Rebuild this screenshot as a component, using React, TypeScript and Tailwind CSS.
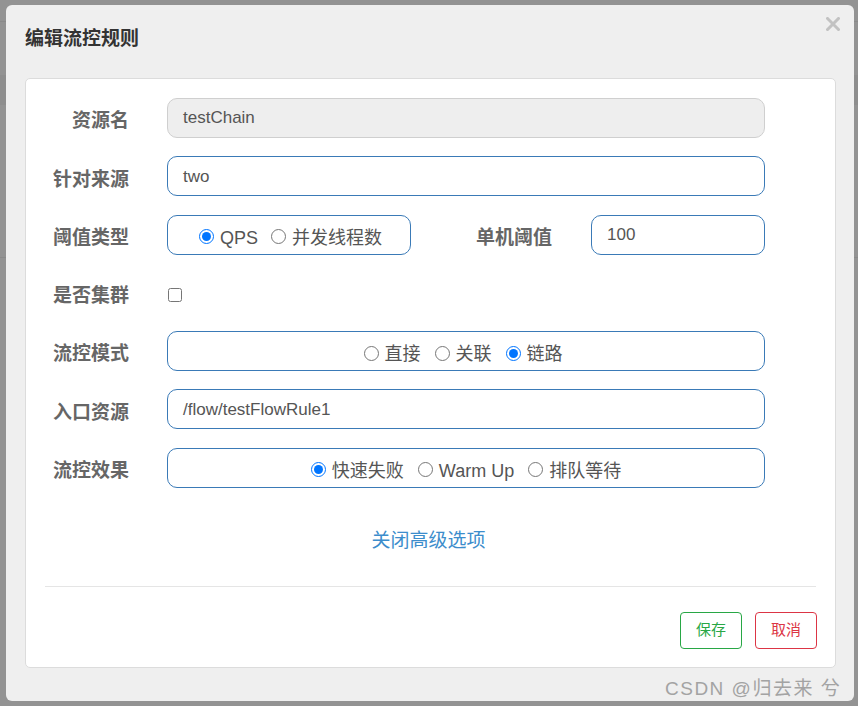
import React from "react";

const font = { fontFamily: '"Liberation Sans", "Noto Sans CJK SC", sans-serif' };

export default function App() {
  return (
    <div className="relative h-[706px] w-[858px] overflow-hidden bg-[#939393]" style={font}>
      {/* page behind overlay */}
      <div className="flex flex-col">
        <div className="h-[22px] border-b border-[#8a8a8a]" />
        <div className="mt-[53px] h-[30px] bg-[#8e8e8e]" />
        <div className="mt-[152px] border-b border-[#8a8a8a]" />
      </div>

      {/* dialog */}
      <div className="absolute left-[6px] top-[5px] flex h-[696px] w-[848px] flex-col rounded-[6px] bg-[#efefef] pl-[19px] pr-[18px]">
        <div className="flex h-[73px] items-start justify-between pt-[20px]">
          <h4 className="text-[19px] font-bold leading-[28px] text-[#333]">编辑流控规则</h4>
          <button className="mr-[-4px] mt-[-8px] p-0">
            <svg width="14" height="14" viewBox="0 0 14 14">
              <path d="M1.5 1.5 L12.5 12.5 M12.5 1.5 L1.5 12.5" stroke="#c2c2c2" strokeWidth="3" strokeLinecap="square" />
            </svg>
          </button>
        </div>

        <div className="flex h-[590px] flex-col rounded-[5px] border border-[#dcdcdc] bg-white pt-[19px]">
          <div className="flex flex-col gap-[18.3px]">
            <Row label="资源名">
              <div className="flex h-[40px] w-[598px] items-center rounded-[10px] border border-[#cfcfcf] bg-[#eeeeee] pl-[15px] text-[17px] text-[#555]">
                testChain
              </div>
            </Row>
            <Row label="针对来源">
              <TextBox value="two" width="w-[598px]" />
            </Row>
            <Row label="阈值类型">
              <div className="flex h-[40px] w-[244px] items-center justify-center gap-[13px] rounded-[10px] border border-[#3a7ab7] pl-[3px] pt-[7px] text-[18px] text-[#555]">
                <Radio label="QPS" checked />
                <Radio label="并发线程数" />
              </div>
              <div className="w-[141px] pt-[7px] text-right text-[19px] font-bold text-[#666]">单机阈值</div>
              <div className="ml-[39px]">
                <TextBox value="100" width="w-[174px]" />
              </div>
            </Row>
            <Row label="是否集群">
              <input type="checkbox" className="ml-[1px] mt-[5px] h-[14px] w-[14px]" />
            </Row>
            <Row label="流控模式">
              <div className="flex h-[40px] w-[598px] items-center justify-center gap-[14px] rounded-[10px] border border-[#3a7ab7] pr-[6px] pt-[7px] text-[18px] text-[#555]">
                <Radio label="直接" />
                <Radio label="关联" />
                <Radio label="链路" checked />
              </div>
            </Row>
            <Row label="入口资源">
              <TextBox value="/flow/testFlowRule1" width="w-[598px]" />
            </Row>
            <Row label="流控效果">
              <div className="flex h-[40px] w-[598px] items-center justify-center gap-[14px] rounded-[10px] border border-[#3a7ab7] pt-[7px] text-[18px] text-[#555]">
                <Radio label="快速失败" checked />
                <Radio label="Warm Up" />
                <Radio label="排队等待" />
              </div>
            </Row>
          </div>

          <div className="mt-[39px] flex justify-center pr-[4px]">
            <a className="cursor-pointer text-[19px] leading-[28px] text-[#3c8dcc]">关闭高级选项</a>
          </div>

          <div className="mx-[19px] mt-[31px] border-t border-[#e5e5e5]" />

          <div className="mr-[18px] mt-[25px] flex justify-end gap-[13px]">
            <button className="h-[37px] w-[62px] rounded-[4px] border border-[#28a745] bg-white text-[15px] text-[#28a745]">
              保存
            </button>
            <button className="h-[37px] w-[62px] rounded-[4px] border border-[#dc3545] bg-white text-[15px] text-[#dc3545]">
              取消
            </button>
          </div>
        </div>
      </div>

      {/* watermark */}
      <div className="absolute left-[665px] top-[675px] text-[19px] tracking-[1.5px] text-[#a3a3a3]">
        CSDN @归去来 兮
      </div>
    </div>
  );
}

function Row({ label, children }: { label: string; children: React.ReactNode }) {
  return (
    <div className="flex h-[40px] items-center">
      <div className="w-[103px] pt-[7px] text-right text-[19px] font-bold text-[#666]">{label}</div>
      <div className="ml-[38px] flex items-center">{children}</div>
    </div>
  );
}

function TextBox({ value, width }: { value: string; width: string }) {
  return (
    <div className={`flex h-[40px] items-center rounded-[10px] border border-[#3a7ab7] bg-white pl-[15px] text-[17px] text-[#555] ${width}`}>
      {value}
    </div>
  );
}

function Radio({ label, checked }: { label: string; checked?: boolean }) {
  return (
    <label className="flex items-center gap-[6px]">
      <input type="radio" defaultChecked={checked} className="m-0 mt-[-3px] h-[15px] w-[15px]" />
      <span>{label}</span>
    </label>
  );
}
